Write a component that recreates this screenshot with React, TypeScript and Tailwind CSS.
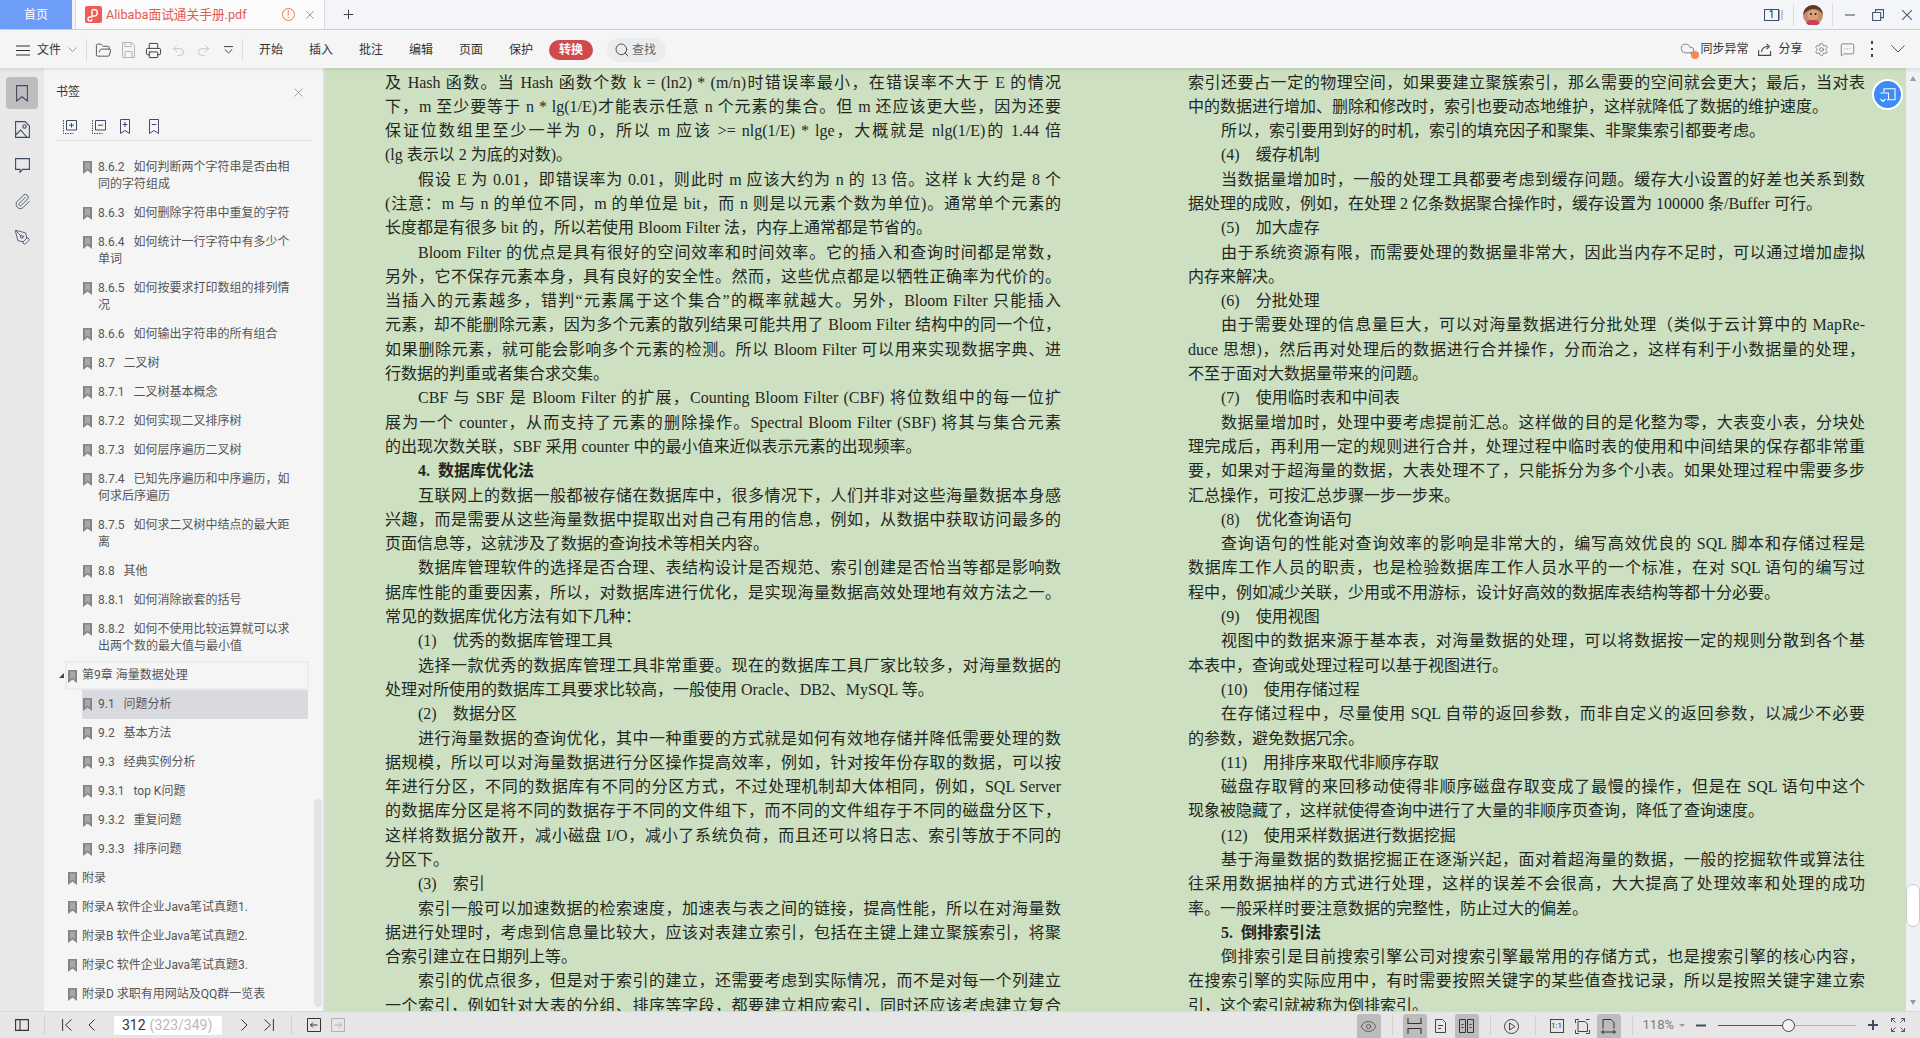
import React from 'react';
import { FolderOpen, Printer, Undo2, Redo2, Search, Paperclip, PenTool, Settings, MessageSquareMore, Cloud, Eye, X, Plus } from 'lucide-react';

const LEFT = [
'及 Hash 函数。当 Hash 函数个数 k = (ln2) * (m/n)时错误率最小，在错误率不大于 E 的情况',
'下，m 至少要等于 n * lg(1/E)才能表示任意 n 个元素的集合。但 m 还应该更大些，因为还要',
'保证位数组里至少一半为 0，所以 m 应该 >= nlg(1/E) * lge，大概就是 nlg(1/E)的 1.44 倍',
'(lg 表示以 2 为底的对数)。$',
'|假设 E 为 0.01，即错误率为 0.01，则此时 m 应该大约为 n 的 13 倍。这样 k 大约是 8 个',
'(注意：m 与 n 的单位不同，m 的单位是 bit，而 n 则是以元素个数为单位)。通常单个元素的',
'长度都是有很多 bit 的，所以若使用 Bloom Filter 法，内存上通常都是节省的。$',
'|Bloom Filter 的优点是具有很好的空间效率和时间效率。它的插入和查询时间都是常数，',
'另外，它不保存元素本身，具有良好的安全性。然而，这些优点都是以牺牲正确率为代价的。',
'当插入的元素越多，错判“元素属于这个集合”的概率就越大。另外，Bloom Filter 只能插入',
'元素，却不能删除元素，因为多个元素的散列结果可能共用了 Bloom Filter 结构中的同一个位，',
'如果删除元素，就可能会影响多个元素的检测。所以 Bloom Filter 可以用来实现数据字典、进',
'行数据的判重或者集合求交集。$',
'|CBF 与 SBF 是 Bloom Filter 的扩展，Counting Bloom Filter (CBF) 将位数组中的每一位扩',
'展为一个 counter，从而支持了元素的删除操作。Spectral Bloom Filter (SBF) 将其与集合元素',
'的出现次数关联，SBF 采用 counter 中的最小值来近似表示元素的出现频率。$',
'#4.\u00a0\u00a0数据库优化法',
'|互联网上的数据一般都被存储在数据库中，很多情况下，人们并非对这些海量数据本身感',
'兴趣，而是需要从这些海量数据中提取出对自己有用的信息，例如，从数据中获取访问最多的',
'页面信息等，这就涉及了数据的查询技术等相关内容。$',
'|数据库管理软件的选择是否合理、表结构设计是否规范、索引创建是否恰当等都是影响数',
'据库性能的重要因素，所以，对数据库进行优化，是实现海量数据高效处理地有效方法之一。',
'常见的数据库优化方法有如下几种：$',
'|(1)\u2003优秀的数据库管理工具$',
'|选择一款优秀的数据库管理工具非常重要。现在的数据库工具厂家比较多，对海量数据的',
'处理对所使用的数据库工具要求比较高，一般使用 Oracle、DB2、MySQL 等。$',
'|(2)\u2003数据分区$',
'|进行海量数据的查询优化，其中一种重要的方式就是如何有效地存储并降低需要处理的数',
'据规模，所以可以对海量数据进行分区操作提高效率，例如，针对按年份存取的数据，可以按',
'年进行分区，不同的数据库有不同的分区方式，不过处理机制却大体相同，例如，SQL Server',
'的数据库分区是将不同的数据存于不同的文件组下，而不同的文件组存于不同的磁盘分区下，',
'这样将数据分散开，减小磁盘 I/O，减小了系统负荷，而且还可以将日志、索引等放于不同的',
'分区下。$',
'|(3)\u2003索引$',
'|索引一般可以加速数据的检索速度，加速表与表之间的链接，提高性能，所以在对海量数',
'据进行处理时，考虑到信息量比较大，应该对表建立索引，包括在主键上建立聚簇索引，将聚',
'合索引建立在日期列上等。$',
'|索引的优点很多，但是对于索引的建立，还需要考虑到实际情况，而不是对每一个列建立',
'一个索引，例如针对大表的分组、排序等字段，都要建立相应索引，同时还应该考虑建立复合',
];

const RIGHT = [
'索引还要占一定的物理空间，如果要建立聚簇索引，那么需要的空间就会更大；最后，当对表',
'中的数据进行增加、删除和修改时，索引也要动态地维护，这样就降低了数据的维护速度。$',
'|所以，索引要用到好的时机，索引的填充因子和聚集、非聚集索引都要考虑。$',
'|(4)\u2003缓存机制$',
'|当数据量增加时，一般的处理工具都要考虑到缓存问题。缓存大小设置的好差也关系到数',
'据处理的成败，例如，在处理 2 亿条数据聚合操作时，缓存设置为 100000 条/Buffer 可行。$',
'|(5)\u2003加大虚存$',
'|由于系统资源有限，而需要处理的数据量非常大，因此当内存不足时，可以通过增加虚拟',
'内存来解决。$',
'|(6)\u2003分批处理$',
'|由于需要处理的信息量巨大，可以对海量数据进行分批处理（类似于云计算中的 MapRe-',
'duce 思想)，然后再对处理后的数据进行合并操作，分而治之，这样有利于小数据量的处理，',
'不至于面对大数据量带来的问题。$',
'|(7)\u2003使用临时表和中间表$',
'|数据量增加时，处理中要考虑提前汇总。这样做的目的是化整为零，大表变小表，分块处',
'理完成后，再利用一定的规则进行合并，处理过程中临时表的使用和中间结果的保存都非常重',
'要，如果对于超海量的数据，大表处理不了，只能拆分为多个小表。如果处理过程中需要多步',
'汇总操作，可按汇总步骤一步一步来。$',
'|(8)\u2003优化查询语句$',
'|查询语句的性能对查询效率的影响是非常大的，编写高效优良的 SQL 脚本和存储过程是',
'数据库工作人员的职责，也是检验数据库工作人员水平的一个标准，在对 SQL 语句的编写过',
'程中，例如减少关联，少用或不用游标，设计好高效的数据库表结构等都十分必要。$',
'|(9)\u2003使用视图$',
'|视图中的数据来源于基本表，对海量数据的处理，可以将数据按一定的规则分散到各个基',
'本表中，查询或处理过程可以基于视图进行。$',
'|(10)\u2003使用存储过程$',
'|在存储过程中，尽量使用 SQL 自带的返回参数，而非自定义的返回参数，以减少不必要',
'的参数，避免数据冗余。$',
'|(11)\u2003用排序来取代非顺序存取$',
'|磁盘存取臂的来回移动使得非顺序磁盘存取变成了最慢的操作，但是在 SQL 语句中这个',
'现象被隐藏了，这样就使得查询中进行了大量的非顺序页查询，降低了查询速度。$',
'|(12)\u2003使用采样数据进行数据挖掘$',
'|基于海量数据的数据挖掘正在逐渐兴起，面对着超海量的数据，一般的挖掘软件或算法往',
'往采用数据抽样的方式进行处理，这样的误差不会很高，大大提高了处理效率和处理的成功',
'率。一般采样时要注意数据的完整性，防止过大的偏差。$',
'#5.\u00a0\u00a0倒排索引法',
'|倒排索引是目前搜索引擎公司对搜索引擎最常用的存储方式，也是搜索引擎的核心内容，',
'在搜索引擎的实际应用中，有时需要按照关键字的某些值查找记录，所以是按照关键字建立索',
'引，这个索引就被称为倒排索引。$',
];

type Row = { n?: string; t: string; lvl: 1 | 2; sel?: boolean; chap?: boolean };
const ROWS: Row[] = [
  { n: '8.6.2', t: '如何判断两个字符串是否由相同的字符组成', lvl: 2 },
  { n: '8.6.3', t: '如何删除字符串中重复的字符', lvl: 2 },
  { n: '8.6.4', t: '如何统计一行字符中有多少个单词', lvl: 2 },
  { n: '8.6.5', t: '如何按要求打印数组的排列情况', lvl: 2 },
  { n: '8.6.6', t: '如何输出字符串的所有组合', lvl: 2 },
  { n: '8.7', t: '二叉树', lvl: 2 },
  { n: '8.7.1', t: '二叉树基本概念', lvl: 2 },
  { n: '8.7.2', t: '如何实现二叉排序树', lvl: 2 },
  { n: '8.7.3', t: '如何层序遍历二叉树', lvl: 2 },
  { n: '8.7.4', t: '已知先序遍历和中序遍历，如何求后序遍历', lvl: 2 },
  { n: '8.7.5', t: '如何求二叉树中结点的最大距离', lvl: 2 },
  { n: '8.8', t: '其他', lvl: 2 },
  { n: '8.8.1', t: '如何消除嵌套的括号', lvl: 2 },
  { n: '8.8.2', t: '如何不使用比较运算就可以求出两个数的最大值与最小值', lvl: 2 },
  { t: '第9章 海量数据处理', lvl: 1, chap: true },
  { n: '9.1', t: '问题分析', lvl: 2, sel: true },
  { n: '9.2', t: '基本方法', lvl: 2 },
  { n: '9.3', t: '经典实例分析', lvl: 2 },
  { n: '9.3.1', t: 'top K问题', lvl: 2 },
  { n: '9.3.2', t: '重复问题', lvl: 2 },
  { n: '9.3.3', t: '排序问题', lvl: 2 },
  { t: '附录', lvl: 1 },
  { t: '附录A 软件企业Java笔试真题1.', lvl: 1 },
  { t: '附录B 软件企业Java笔试真题2.', lvl: 1 },
  { t: '附录C 软件企业Java笔试真题3.', lvl: 1 },
  { t: '附录D 求职有用网站及QQ群一览表', lvl: 1 },
];

function S({ w = 16, h = 16, vb, c = '#4a4f5c', sw = 1.1, children }: { w?: number; h?: number; vb?: string; c?: string; sw?: number; children: React.ReactNode }) {
  return (
    <svg width={w} height={h} viewBox={vb ?? `0 0 ${w} ${h}`} fill="none" stroke={c} strokeWidth={sw} className="shrink-0 block">
      {children}
    </svg>
  );
}

function Mark() {
  return (
    <svg width="9" height="13" viewBox="0 0 9 13" className="shrink-0 block mt-[2px]">
      <path d="M0 0h9v13L4.500 9.600 0 13z" fill="#858585" />
      <path d="M2 1.500h5v8L4.500 7.600 2 9.500z" fill="#a8a8a8" />
    </svg>
  );
}

function DocLine({ s }: { s: string }) {
  const indent = s[0] === '|' || s[0] === '#';
  const head = s[0] === '#';
  const last = s.endsWith('$') || head;
  const text = s.replace(/^[|#]/, '').replace(/\$$/, '');
  return (
    <div
      className={`h-[24.3px] leading-[24.3px] ${indent ? 'pl-[33px]' : ''} ${head ? 'font-bold' : ''} ${last ? 'text-left' : 'text-justify [text-align-last:justify]'}`}
    >
      {text}
    </div>
  );
}

function Sep() {
  return <div className="w-px h-[22px] bg-[#dcdcdc] shrink-0" />;
}

function Tree({ r }: { r: Row }) {
  if (r.chap) {
    return (
      <div className="ml-[21px] w-[244px] h-[29px] border-2 border-[#ececec] flex items-center pl-[1px] relative">
        <span className="absolute left-[-8px] top-[10px] w-0 h-0 border-l-[5px] border-l-transparent border-b-[5px] border-b-[#444]" />
        <Mark />
        <span className="ml-[5px] leading-[17px]">{r.t}</span>
      </div>
    );
  }
  if (r.lvl === 1) {
    return (
      <div className="ml-[21px] w-[243px] pl-[3px] py-[6px] flex">
        <Mark />
        <span className="ml-[5px] leading-[17px]">{r.t}</span>
      </div>
    );
  }
  return (
    <div className={`ml-[38px] w-[226px] pl-[1px] pr-[12px] py-[6px] flex ${r.sel ? 'bg-[#d9dadf] rounded-b-[2px]' : ''}`}>
      <Mark />
      <span className="ml-[6px] leading-[17px] block">{`${r.n}\u00a0\u00a0\u00a0${r.t}`}</span>
    </div>
  );
}

function Hl({ on, children, w = 24 }: { on?: boolean; children: React.ReactNode; w?: number }) {
  return (
    <div className={`h-[24px] self-end flex items-center justify-center shrink-0 rounded-t-[3px] ${on ? 'bg-[#bcbcbc]' : ''}`} style={{ width: w }}>
      {children}
    </div>
  );
}

export default function App() {
  return (
    <div className="w-[1920px] h-[1038px] flex flex-col overflow-hidden bg-[#f5f5f5] text-[#333] text-[12px] [font-family:Roboto,'Noto_Sans_CJK_SC',sans-serif]">
      {/* tab bar */}
      <div className="h-[30px] shrink-0 flex items-stretch bg-[#f3f5f9] border-b border-[#d3d6e2]">
        <div className="w-[72px] bg-[#6d9df8] text-white flex items-center justify-center">首页</div>
        <div className="ml-[3px] w-[250px] bg-[#fbfbfc] border-x border-[#d9dbe4] flex items-center pl-[9px]">
          <svg width="17" height="17" viewBox="0 0 17 17" className="shrink-0">
            <rect width="17" height="17" rx="2" fill="#ee5c57" />
            <path d="M7 13a2 2 0 1 1-2-2h2V5.500a2 2 0 0 1 2-2 3 3 0 0 1 0 6.500H8" fill="none" stroke="#fff" strokeWidth="1.4" />
          </svg>
          <span className="ml-[4px] text-[#e35a52] text-[12.7px]">Alibaba面试通关手册.pdf</span>
          <span className="ml-[35px] w-[13px] h-[13px] rounded-full border border-[#ee7b3e] text-[#ee7b3e] text-[10px] leading-[11px] text-center">!</span>
          <span className="ml-[8px]"><X size={14} strokeWidth={1.1} color="#666" /></span>
        </div>
        <div className="ml-[16px] flex items-center"><Plus size={15} strokeWidth={1.6} color="#444" /></div>
        <div className="ml-auto flex items-center pr-[8px]">
          <div className="w-[15px] h-[12px] border border-[#3d4c6e] text-[10px] leading-[10px] text-center text-[#222]">1</div>
          <S w={4} h={10} c="#8a93a8" sw={0.9}><path d="M0.500 0v10M3 0v10" /></S>
          <div className="ml-[10px]"><Sep /></div>
          <svg width="20" height="20" viewBox="0 0 20 20" className="ml-[9px] shrink-0">
            <circle cx="10" cy="10" r="10" fill="#c9896a" />
            <path d="M0 10a10 10 0 0 1 20 0c-2-4-5-6-9-6s-8 2-11 6z" fill="#5a3a2a" />
            <ellipse cx="10" cy="10" rx="5.500" ry="5.500" fill="#d9a07a" />
            <circle cx="8" cy="9" r="1" fill="#222" /><circle cx="12.500" cy="9" r="1" fill="#222" />
            <path d="M3 18c2-3 4-3 7-3s5 1 7 3a10 10 0 0 1-14 0z" fill="#c8405a" />
          </svg>
          <div className="ml-[9px]"><Sep /></div>
          <div className="ml-[12px]"><S w={10} h={10} c="#4a5878" sw={1.1}><path d="M0 5h10" /></S></div>
          <div className="ml-[17px]"><S w={12} h={12} c="#4a5878" sw={1.1}><path d="M3.500 3V.6h8v8H9M.6 3.500h8v8h-8z" /></S></div>
          <div className="ml-[18px]"><S w={10} h={10} c="#4a5878" sw={1.1}><path d="M0 0l10 10M10 0L0 10" /></S></div>
        </div>
      </div>

      {/* ribbon */}
      <div className="h-[38px] shrink-0 flex items-center pl-[16px] pt-[2px] bg-[#f5f5f5] relative z-10 shadow-[0_1px_4px_rgba(0,0,0,0.12)]">
        <S w={14} h={11} c="#333" sw={1.1}><path d="M0 1h14M0 5.500h14M0 10h14" /></S>
        <span className="ml-[7px]">文件</span>
        <div className="ml-[7px]"><S w={9} h={6} c="#999" sw={1}><path d="M.5.500l4 4 4-4" /></S></div>
        <div className="ml-[9px]"><Sep /></div>
        <div className="ml-[4px] flex items-center">
          <div className="w-[25px] flex justify-center"><FolderOpen size={17} strokeWidth={1.2} color="#3d3d3d" /></div>
          <div className="w-[25px] flex justify-center"><S w={13} h={16} c="#b4b4b4" sw={1}><path d="M.5.500h9l3 3v12h-12zM3 .5v4h6v-4M3 15v-5.500h7V15" /></S></div>
          <div className="w-[25px] flex justify-center"><Printer size={17} strokeWidth={1.4} color="#3d3d3d" /></div>
          <div className="w-[25px] flex justify-center"><Undo2 size={15} strokeWidth={1.1} color="#b4b4b4" /></div>
          <div className="w-[25px] flex justify-center"><Redo2 size={15} strokeWidth={1.1} color="#b4b4b4" /></div>
          <div className="w-[25px] flex justify-center"><S w={9} h={8} c="#444" sw={1}><path d="M0 .6h9M.8 3.500L4.500 7l3.700-3.500" /></S></div>
        </div>
        <div className="ml-[1px]"><Sep /></div>
        <div className="ml-[16px] flex text-[#333]">
          <span className="w-[50px]">开始</span>
          <span className="w-[50px]">插入</span>
          <span className="w-[50px]">批注</span>
          <span className="w-[50px]">编辑</span>
          <span className="w-[50px]">页面</span>
          <span className="w-[40px]">保护</span>
        </div>
        <div className="w-[44px] h-[20px] rounded-full bg-[#cf4a4c] text-white font-bold flex items-center justify-center">转换</div>
        <div className="ml-[14px] w-[59px] h-[24px] rounded-full bg-[#ebecee] text-[#666] flex items-center pl-[7px]">
          <Search size={16} strokeWidth={1.4} color="#444" />
          <span className="ml-[2px]">查找</span>
        </div>
        <div className="ml-auto flex items-center pr-[15px] -mt-[2px]">
          <div className="relative w-[16px] h-[16px]">
            <Cloud size={15} strokeWidth={1.1} color="#555" />
            <span className="absolute right-[-3px] bottom-[-2px] w-[8px] h-[8px] rounded-full bg-[#f08a56]" />
          </div>
          <span className="ml-[4px]">同步异常</span>
          <div className="ml-[10px]"><S w={15} h={13} c="#444" sw={1.1}><path d="M.6 7v5.400h12V8M3.500 9C4 5.500 6.500 3.500 10 3.500M8.500.8l3 2.700-3 2.700" /></S></div>
          <span className="ml-[5px]">分享</span>
          <div className="ml-[11px]"><Settings size={15} strokeWidth={1.1} color="#555" /></div>
          <div className="ml-[11px]"><MessageSquareMore size={15} strokeWidth={1.1} color="#555" /></div>
          <div className="ml-[16px] flex flex-col gap-[4px]">
            <span className="w-[2.5px] h-[2.5px] bg-[#444]" /><span className="w-[2.5px] h-[2.5px] bg-[#444]" /><span className="w-[2.5px] h-[2.5px] bg-[#444]" />
          </div>
          <div className="ml-[18px]"><S w={14} h={8} c="#555" sw={1}><path d="M.5.500L7 7 13.500.5" /></S></div>
        </div>
      </div>

      {/* main */}
      <div className="flex-1 min-h-0 flex">
        {/* rail */}
        <div className="w-[44px] shrink-0 bg-[#e8e8e8] pt-[9px] flex flex-col items-center">
          <div className="w-[32px] h-[32px] rounded-[4px] bg-[#bdbdbd] flex items-center justify-center">
            <S w={12} h={17} c="#3f4a66" sw={1.1}><path d="M.6.600h10.800v15.400L6 11.700.6 16z" /></S>
          </div>
          <div className="mt-[8px] h-[24px] flex items-center">
            <S w={15} h={17} c="#3f4a66" sw={1.1}><path d="M.6.600h9.500l4.300 4.300v11.500H.6zM.6 14l5-5 6.500 7.400" /><circle cx="9.500" cy="5.500" r="1.700" /></S>
          </div>
          <div className="mt-[12px] h-[24px] flex items-center">
            <S w={15} h={15} c="#3f4a66" sw={1.1}><path d="M.6.600h13.800v10.800H7.500L5 14.400v-3H.6z" /></S>
          </div>
          <div className="mt-[12px] h-[24px] flex items-center"><Paperclip size={17} strokeWidth={1.2} color="#3f4a66" /></div>
          <div className="mt-[12px] h-[24px] flex items-center"><PenTool size={17} strokeWidth={1.2} color="#3f4a66" /></div>
        </div>

        {/* bookmarks panel */}
        <div className="w-[279px] shrink-0 relative flex flex-col overflow-hidden bg-[#f5f5f5] text-[#565656]">
          <div className="h-[48px] shrink-0 flex items-center pl-[12px] pr-[17px] text-[#333]">
            <span>书签</span>
            <div className="ml-auto"><X size={15} strokeWidth={1} color="#777" /></div>
          </div>
          <div className="ml-[12px] mr-[12px] h-[25px] shrink-0 pl-[7px] border-b border-[#e2e2e2] flex items-start">
            <div className="w-[29px] mt-[3px]"><S w={14} h={15} c="#3f4a66" sw={1}><path d="M3.500 1.500h10v9.500h-10zM8.500 4v4.500M6 6.200h5" /><path d="M.5 1v13.500h10" strokeDasharray="1.500 1" /></S></div>
            <div className="w-[28px] mt-[3px]"><S w={14} h={15} c="#3f4a66" sw={1}><path d="M3.500 1.500h10v9.500h-10zM6 6.200h5" /><path d="M.5 1v13.500h10" strokeDasharray="1.500 1" /></S></div>
            <div className="w-[29px] mt-[3px]"><S w={10} h={15} c="#3f4a66" sw={1}><path d="M.5.500h9v14L5 11.500.5 14.500zM5 3v5M2.700 5.500h4.600" /></S></div>
            <div className="mt-[3px]"><S w={10} h={15} c="#3f4a66" sw={1}><path d="M.5.500h9v14L5 11.500.5 14.500zM2.700 5.500h4.600" /></S></div>
          </div>
          <div className="pt-[12px]">
            {ROWS.map((r, i) => <Tree key={i} r={r} />)}
          </div>
          <div className="absolute left-[270px] top-[731px] w-[8px] h-[208px] rounded-full bg-[#e3e3e6]" />
        </div>

        {/* document */}
        <div className="flex-1 min-w-0 relative flex border-l-2 border-[#dedede] bg-[#cde0c1] overflow-hidden pl-[60px] pt-[2.5px] text-[#23281f] text-[16px] [font-family:'Liberation_Serif','Noto_Sans_CJK_SC',serif]">
          <div className="w-[676px] shrink-0">
            {LEFT.map((s, i) => <DocLine key={i} s={s} />)}
          </div>
          <div className="w-[677px] shrink-0 ml-[127px]">
            {RIGHT.map((s, i) => <DocLine key={i} s={s} />)}
          </div>
          <div className="absolute top-[11px] right-[3px] w-[31px] h-[31px] rounded-full bg-[#3d8bf5] border-[2.5px] border-white flex items-center justify-center">
            <S w={16} h={14} c="#fff" sw={1.1}><path d="M4 4V.8h11v11H7M.5 5h8v6M.5 11l2.500 2.500L5.500 11" /></S>
          </div>
        </div>

        {/* doc scrollbar */}
        <div className="w-[14px] shrink-0 bg-[#eef0f3] flex flex-col items-center pt-[8px] pb-[6px]">
          <span className="w-0 h-0 border-x-[3.5px] border-x-transparent border-b-[5px] border-b-[#9a9a9a]" />
          <div className="mt-[803px] w-[14px] h-[43px] rounded-[7px] bg-white border border-[#c9c9c9]" />
          <span className="mt-auto w-0 h-0 border-x-[3.5px] border-x-transparent border-t-[5px] border-t-[#9a9a9a]" />
        </div>
      </div>

      {/* status bar */}
      <div className="h-[27px] shrink-0 flex items-center bg-[#e6e6e6] border-t border-[#d8d8d8] pl-[15px]">
        <S w={14} h={12} c="#333" sw={1.1}><path d="M.6.600h12.800v10.800H.6zM5 .6v10.800" /></S>
        <div className="ml-[15px] w-px h-[20px] bg-[#d2d2d2]" />
        <div className="ml-[17px]"><S w={10} h={12} c="#333" sw={1}><path d="M.6 0v12M9.500.5L3.500 6l6 5.500" /></S></div>
        <div className="ml-[16px]"><S w={7} h={12} c="#333" sw={1}><path d="M6.500.5L1 6l5.500 5.500" /></S></div>
        <div className="ml-[18px] w-[110px] h-[21px] bg-white border border-[#e4e4e4] flex items-center pl-[8px] text-[14px] text-[#333]">
          312<span className="ml-[4px] text-[#b9b9b9]">(323/349)</span>
        </div>
        <div className="ml-[18px]"><S w={7} h={12} c="#333" sw={1}><path d="M.5.500L6 6 .5 11.500" /></S></div>
        <div className="ml-[16px]"><S w={10} h={12} c="#333" sw={1}><path d="M9.400 0v12M.5.500l6 5.500-6 5.500" /></S></div>
        <div className="ml-[17px] w-px h-[20px] bg-[#d2d2d2]" />
        <div className="ml-[15px]"><S w={14} h={14} c="#333" sw={1}><path d="M.5.500h13v13H.5zM10.500 7h-7M6 4.500L3.500 7 6 9.500" /></S></div>
        <div className="ml-[10px]"><S w={14} h={14} c="#b2b2b2" sw={1}><path d="M.5.500h13v13H.5zM3.500 7h7M8 4.500L10.500 7 8 9.500" /></S></div>

        <div className="ml-auto flex items-center h-full pr-[15px]">
          <Hl on><Eye size={17} strokeWidth={1.1} color="#444" /></Hl>
          <div className="ml-[11px] w-px h-[20px] bg-[#d2d2d2]" />
          <div className="ml-[10px] h-full flex items-end">
            <Hl on><S w={15} h={16} c="#333" sw={1.1}><path d="M1 0v5.500h13V0M1 16v-5.500h13V16" /></S></Hl>
          </div>
          <Hl w={28}><S w={11} h={14} c="#444" sw={1}><path d="M.5.500h7l3 3v10H.5zM3 6.500h5M3 9.500h3" /></S></Hl>
          <Hl on><S w={15} h={14} c="#333" sw={1}><path d="M.5.500h6v13h-6zM8.500.5h6v13h-6zM2.500 5.500h2M2.500 8.500h2M10.500 5.500h2M10.500 8.500h2" /></S></Hl>
          <div className="ml-[11px] w-px h-[20px] bg-[#d2d2d2]" />
          <div className="ml-[9px] h-full flex items-end">
            <Hl><S w={15} h={15} c="#444" sw={1}><circle cx="7.500" cy="7.500" r="7" /><path d="M5.500 4v7L11 7.500z" /></S></Hl>
          </div>
          <div className="ml-[11px] w-px h-[20px] bg-[#d2d2d2]" />
          <div className="ml-[9px] h-full flex items-end">
            <Hl><div className="w-[14px] h-[14px] border border-[#444] text-[8px] leading-[12px] text-center text-[#333]">1:1</div></Hl>
          </div>
          <div className="ml-[2px] h-full flex items-end">
            <Hl><S w={15} h={15} c="#444" sw={1}><path d="M3 2.500h7l2.500 2.500v7.500H3zM.5 4V.5H4M11 .5h3.500M.5 11v3.500H4M11 14.500h3.500V11" /></S></Hl>
          </div>
          <div className="ml-[2px] h-full flex items-end">
            <Hl on><S w={15} h={15} c="#333" sw={1}><path d="M2 9.500V.5h8l3 3v6M.5 13h14M3 11l-2.500 2L3 15M12 11l2.500 2L12 15" /></S></Hl>
          </div>
          <div className="ml-[11px] w-px h-[20px] bg-[#d2d2d2]" />
          <span className="ml-[10px] text-[13px] text-[#7d7d7d]">118%</span>
          <span className="ml-[5px] w-0 h-0 border-x-[3px] border-x-transparent border-t-[3.5px] border-t-[#999]" />
          <div className="ml-[11px]"><S w={10} h={3} c="#3f4a66" sw={2}><path d="M0 1.500h10" /></S></div>
          <div className="ml-[12px] w-[138px] h-[13px] relative flex items-center">
            <div className="w-[70px] h-px bg-[#555]" />
            <div className="flex-1 h-px bg-[#b5b5b5]" />
            <span className="absolute left-[64px] top-0 w-[13px] h-[13px] rounded-full bg-[#f3f3f3] border border-[#444]" />
          </div>
          <div className="ml-[12px]"><S w={10} h={10} c="#3f4a66" sw={2}><path d="M0 5h10M5 0v10" /></S></div>
          <div className="ml-[13px]"><S w={14} h={14} c="#4a5878" sw={1}><path d="M.5 4V.5H4M.5.500l4 4M10 .5h3.500V4M13.500.5l-4 4M.5 10v3.500H4M.5 13.500l4-4M13.500 10v3.500H10M13.500 13.500l-4-4" /></S></div>
        </div>
      </div>
    </div>
  );
}
